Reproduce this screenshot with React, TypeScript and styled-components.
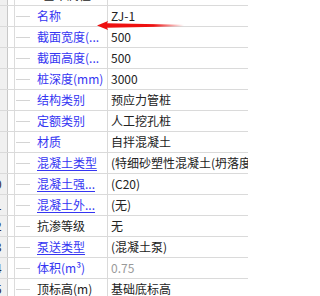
import React from "react";
import styled, { createGlobalStyle } from "styled-components";

const GlobalStyle = createGlobalStyle`
  html, body {
    margin: 0;
    padding: 0;
    background: #ffffff;
    overflow: hidden;
  }
  body {
    font-family: "Noto Sans CJK SC", "Liberation Sans", sans-serif;
    font-size: 12px;
  }
  *, *::before, *::after {
    box-sizing: border-box;
  }
`;

const Panel = styled.div`
  position: relative;
  width: 248px;
  height: 296px;
  overflow: hidden;
`;

const Table = styled.div`
  margin-top: -15px;
  display: flex;
  flex-direction: column;
`;

const Row = styled.div`
  display: grid;
  grid-template-columns: 8px 7px 93px 1fr;
  height: 21px;
  border-bottom: 1px solid #dadada;
`;

const NumCell = styled.div`
  background: #f0f0f0;
  border-right: 1px solid #c8c8c8;
  overflow: hidden;
  color: #2a2a40;
`;

const NumText = styled.span`
  display: block;
  width: 24px;
  margin-left: -17px;
  text-align: center;
  line-height: 20px;
`;

const GapCell = styled.div`
  border-right: 1px solid #dcdcdc;
`;

const NameCell = styled.div<{ $color: string; $underline?: boolean }>`
  display: flex;
  align-items: center;
  border-right: 1px solid #dadada;
  overflow: hidden;
  white-space: nowrap;
  color: ${(p) => p.$color};
  text-decoration: ${(p) => (p.$underline ? "underline" : "none")};
  text-underline-offset: 2px;
  line-height: 20px;

  &::before {
    content: "";
    flex: none;
    width: 14px;
    height: 1px;
    margin-left: 1px;
    margin-right: 7px;
    background: #d4d4d4;
  }
`;

const HeaderName = styled.div`
  display: flex;
  align-items: center;
  gap: 6px;
  border-right: 1px solid #dadada;
  padding-left: 13px;
  color: #222;
  white-space: nowrap;
  overflow: hidden;
  line-height: 20px;
`;

const Toggle = styled.span`
  width: 9px;
  height: 9px;
  border: 1px solid #555;
`;

const ValueCell = styled.div<{ $muted?: boolean }>`
  display: flex;
  align-items: center;
  padding-left: 3px;
  white-space: nowrap;
  overflow: hidden;
  color: ${(p) => (p.$muted ? "#9a9a9a" : "#222222")};
  line-height: 20px;
`;

const Arrow = styled.svg`
  position: absolute;
  left: 96px;
  top: 19px;
`;

const BLUE = "#3535f2";
const BLACK = "#222222";

type Prop = {
  no: number;
  name: string;
  value: string;
  color?: string;
  underline?: boolean;
  muted?: boolean;
};

const rows: Prop[] = [
  { no: 2, name: "名称", value: "ZJ-1" },
  { no: 3, name: "截面宽度(...", value: "500" },
  { no: 4, name: "截面高度(...", value: "500" },
  { no: 5, name: "桩深度(mm)", value: "3000" },
  { no: 6, name: "结构类别", value: "预应力管桩" },
  { no: 7, name: "定额类别", value: "人工挖孔桩" },
  { no: 8, name: "材质", value: "自拌混凝土" },
  { no: 9, name: "混凝土类型", value: "(特细砂塑性混凝土(坍落度", underline: true },
  { no: 10, name: "混凝土强...", value: "(C20)", underline: true },
  { no: 11, name: "混凝土外...", value: "(无)", underline: true },
  { no: 12, name: "抗渗等级", value: "无", color: BLACK },
  { no: 13, name: "泵送类型", value: "(混凝土泵)", underline: true },
  { no: 14, name: "体积(m³)", value: "0.75", muted: true },
  { no: 15, name: "顶标高(m)", value: "基础底标高", color: BLACK },
];

export default function App() {
  return (
    <Panel>
      <GlobalStyle />
      <Table>
        <Row>
          <NumCell>
            <NumText>1</NumText>
          </NumCell>
          <GapCell />
          <HeaderName>
            <Toggle />
            基本属性
          </HeaderName>
          <ValueCell />
        </Row>
        {rows.map((r) => (
          <Row key={r.no}>
            <NumCell>
              <NumText>{r.no}</NumText>
            </NumCell>
            <GapCell />
            <NameCell $color={r.color ?? BLUE} $underline={r.underline}>
              {r.name}
            </NameCell>
            <ValueCell $muted={r.muted}>{r.value}</ValueCell>
          </Row>
        ))}
      </Table>
      <Arrow width="92" height="14" viewBox="0 0 92 14">
        <defs>
          <linearGradient id="shaft" x1="0" x2="1" y1="0" y2="0">
            <stop offset="0" stopColor="#ee1111" />
            <stop offset="0.65" stopColor="#ee1111" />
            <stop offset="1" stopColor="#ee1111" stopOpacity="0" />
          </linearGradient>
        </defs>
        <polygon points="1,6.5 12,2 11,4.2 88,5.8 88,7.2 11,8.8 12,11" fill="url(#shaft)" />
      </Arrow>
    </Panel>
  );
}
